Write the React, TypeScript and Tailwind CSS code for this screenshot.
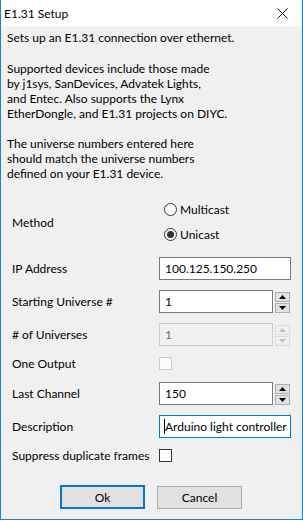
import { ReactNode } from "react";

const font = "font-['Lato','Noto_Sans',sans-serif]";

function Spin({ disabled = false }: { disabled?: boolean }) {
  const box = disabled
    ? "border-[#dcdcdc] bg-[#f0f0f0]"
    : "border-[#adadad] bg-[#e1e1e1]";
  const tri = disabled ? "#bfbfbf" : "#000000";
  return (
    <div className="flex flex-col gap-[1px] ml-[2px] pt-[1px]">
      <div className={`w-[15px] h-[10px] border ${box} flex items-center justify-center`}>
        <svg width="7" height="4" viewBox="0 0 7 4">
          <path d="M3.5 0 L7 4 L0 4 Z" fill={tri} />
        </svg>
      </div>
      <div className={`w-[15px] h-[10px] border ${box} flex items-center justify-center`}>
        <svg width="7" height="4" viewBox="0 0 7 4">
          <path d="M0 0 L7 0 L3.5 4 Z" fill={tri} />
        </svg>
      </div>
    </div>
  );
}

function Row({ label, children, className = "" }: { label: string; children: ReactNode; className?: string }) {
  return (
    <div className={`flex items-center ${className}`}>
      <div className="w-[147px] text-[#000]">{label}</div>
      {children}
    </div>
  );
}

function Radio({ label, checked }: { label: string; checked?: boolean }) {
  return (
    <div className="flex items-center h-[25px]">
      <div className="w-[13px] h-[13px] rounded-full border border-[#333333] bg-white flex items-center justify-center">
        {checked && <div className="w-[7px] h-[7px] rounded-full bg-[#333333]" />}
      </div>
      <span className="ml-[3px]">{label}</span>
    </div>
  );
}

export default function App() {
  return (
    <div className={`w-[303px] h-[520px] flex flex-col border-x border-b border-[#1883d7] bg-[#f0f0f0] text-[12px] leading-[15px] text-black ${font}`}>
      {/* barra de titulo */}
      <div className="h-[26px] bg-white flex items-center justify-between pl-[3px] pr-[14px]">
        <span>E1.31 Setup</span>
        <svg width="11" height="11" viewBox="0 0 11 11">
          <path d="M0.5 0.5 L10.5 10.5 M10.5 0.5 L0.5 10.5" stroke="#111" strokeWidth="1" />
        </svg>
      </div>

      <div className="flex flex-col pl-[6px] pt-[4px]">
        <p>Sets up an E1.31 connection over ethernet.</p>
        <p className="mt-[16px]">
          Supported devices include those made
          <br />by j1sys, SanDevices, Advatek Lights,
          <br />and Entec. Also supports the Lynx
          <br />EtherDongle, and E1.31 projects on DIYC.
        </p>
        <p className="mt-[15px]">
          The universe numbers entered here
          <br />should match the universe numbers
          <br />defined on your E1.31 device.
        </p>
      </div>

      <div className="flex flex-col pl-[11px] mt-[16px]">
        <Row label="Method">
          <div className="flex flex-col pl-[5px]">
            <Radio label="Multicast" />
            <Radio label="Unicast" checked />
          </div>
        </Row>

        <Row label="IP Address" className="mt-[10px]">
          <div className="w-[132px] h-[23px] border border-[#7a7a7a] bg-white flex items-center pl-[5px]">
            100.125.150.250
          </div>
        </Row>

        <Row label="Starting Universe #" className="mt-[10px]">
          <div className="w-[114px] h-[23px] border border-[#7a7a7a] bg-white flex items-center pl-[5px]">
            1
          </div>
          <Spin />
        </Row>

        <Row label="# of Universes" className="mt-[10px]">
          <div className="w-[114px] h-[23px] border border-[#cccccc] bg-[#f0f0f0] text-[#6d6d6d] flex items-center pl-[5px]">
            1
          </div>
          <Spin disabled />
        </Row>

        <Row label="One Output" className="mt-[11px] h-[13px]">
          <div className="w-[13px] h-[13px] border border-[#cccccc] bg-[#fcfcfc]" />
        </Row>

        <Row label="Last Channel" className="mt-[12px]">
          <div className="w-[114px] h-[23px] border border-[#7a7a7a] bg-white flex items-center pl-[5px]">
            150
          </div>
          <Spin />
        </Row>

        <Row label="Description" className="mt-[10px]">
          <div className="w-[132px] h-[23px] border border-[#0078d7] bg-white flex items-center pl-[4px] overflow-hidden whitespace-nowrap">
            <span className="w-[1px] h-[15px] bg-black shrink-0" />
            <span>Arduino light controller</span>
          </div>
        </Row>

        <Row label="Suppress duplicate frames" className="mt-[11px] h-[13px]">
          <div className="w-[13px] h-[13px] border border-[#333333] bg-white" />
        </Row>
      </div>

      <div className="flex pl-[59px] gap-[12px] mt-[23px]">
        <button className="w-[85px] h-[24px] border-2 border-[#0078d7] bg-[#e1e1e1] flex items-center justify-center">
          Ok
        </button>
        <button className="w-[85px] h-[23px] mt-[1px] border border-[#adadad] bg-[#e1e1e1] flex items-center justify-center">
          Cancel
        </button>
      </div>
    </div>
  );
}
